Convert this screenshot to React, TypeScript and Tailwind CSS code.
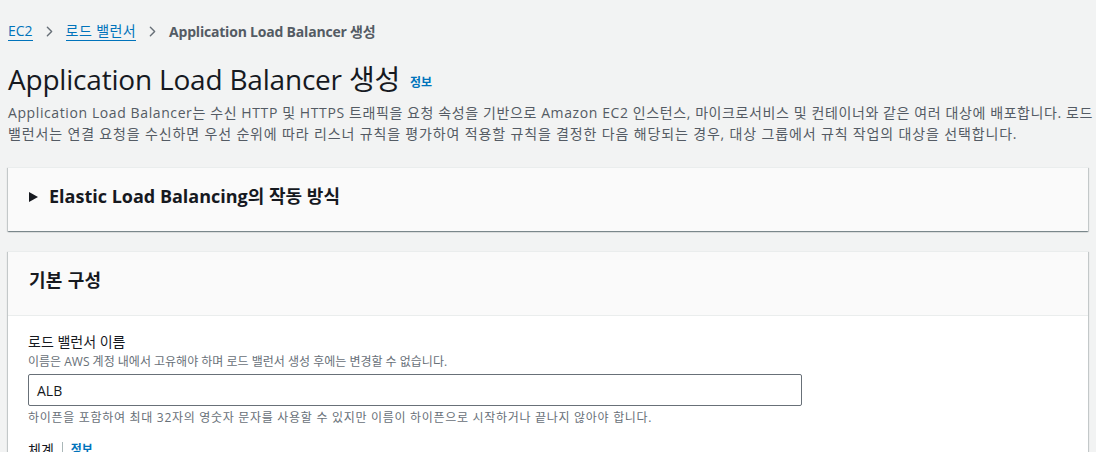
import { ChevronRight } from "lucide-react"

const font = { fontFamily: '"Open Sans", "Noto Sans CJK KR", sans-serif' }

export default function App() {
  return (
    <div className="h-[452px] overflow-hidden bg-[#f2f3f3] px-2 text-[#16191f]" style={font}>
      <nav className="flex h-[62px] items-center gap-[8px] text-[14px]">
        <a className="border-b border-[#0073bb] leading-[18px] text-[#0073bb]">EC2</a>
        <ChevronRight className="size-[17px] text-[#687078]" strokeWidth={2} />
        <a className="border-b border-[#0073bb] leading-[18px] tracking-[0.4px] text-[#0073bb]">로드 밸런서</a>
        <ChevronRight className="size-[17px] text-[#687078]" strokeWidth={2} />
        <span className="font-bold tracking-[-0.2px] text-[#545b64]">Application Load Balancer 생성</span>
      </nav>

      <div className="flex items-end gap-[10px]">
        <h1 className="text-[28px] leading-[34px] tracking-[-0.2px]">Application Load Balancer 생성</h1>
        <a className="mb-[4px] text-[12px] font-bold text-[#0073bb]">정보</a>
      </div>
      <p className="mt-[6px] whitespace-nowrap text-[14px] leading-[21px] text-[#545b64]">
        <span className="tracking-[0.6px]">
          Application Load Balancer는 수신 HTTP 및 HTTPS 트래픽을 요청 속성을 기반으로 Amazon EC2 인스턴스, 마이크로서비스 및 컨테이너와 같은 여러 대상에 배포합니다. 로드
        </span>
        <br />
        <span className="tracking-[0.85px]">
          밸런서는 연결 요청을 수신하면 우선 순위에 따라 리스너 규칙을 평가하여 적용할 규칙을 결정한 다음 해당되는 경우, 대상 그룹에서 규칙 작업의 대상을 선택합니다.
        </span>
      </p>

      <section className="mt-[23px] flex h-[64px] items-center border-t border-[#eaeded] bg-[#fafafa] pb-[6px] pl-[21px] shadow-[0_1px_1px_0_rgba(0,28,36,0.3),1px_1px_1px_0_rgba(0,28,36,0.15),-1px_1px_1px_0_rgba(0,28,36,0.15)]">
        <svg width="9" height="10" viewBox="0 0 9 10" className="mr-[11px]">
          <path d="M0 0 L9 5 L0 10 Z" fill="#16191f" />
        </svg>
        <h2 className="text-[18px] font-bold">Elastic Load Balancing의 작동 방식</h2>
      </section>

      <section className="mt-[20px] border-t border-[#eaeded] bg-white shadow-[0_1px_1px_0_rgba(0,28,36,0.3),1px_1px_1px_0_rgba(0,28,36,0.15),-1px_1px_1px_0_rgba(0,28,36,0.15)]">
        <div className="flex h-[64px] items-center border-b border-[#eaeded] bg-[#fafafa] pb-[6px] pl-[21px]">
          <h2 className="text-[18px] font-bold tracking-[0.3px]">기본 구성</h2>
        </div>
        <div className="px-[20px] pt-[16px] pb-[20px]">
          <label className="block text-[14px] leading-[20px]">로드 밸런서 이름</label>
          <p className="mt-[2px] text-[12px] leading-[16px] text-[#687078]">
            이름은 AWS 계정 내에서 고유해야 하며 로드 밸런서 생성 후에는 변경할 수 없습니다.
          </p>
          <div className="mt-[4px] flex h-[32px] w-[774px] items-center rounded-[2px] border border-[#687078] px-[8px] text-[14px]">
            ALB
          </div>
          <p className="mt-[4px] text-[12px] leading-[16px] tracking-[0.7px] text-[#687078]">
            하이픈을 포함하여 최대 32자의 영숫자 문자를 사용할 수 있지만 이름이 하이픈으로 시작하거나 끝나지 않아야 합니다.
          </p>
          <div className="mt-[14px] flex items-center gap-[8px] text-[14px] leading-[20px]">
            <span>체계</span>
            <span className="h-[16px] border-l border-[#aab7b8]" />
            <a className="text-[12px] font-bold text-[#0073bb]">정보</a>
          </div>
        </div>
      </section>
    </div>
  )
}
